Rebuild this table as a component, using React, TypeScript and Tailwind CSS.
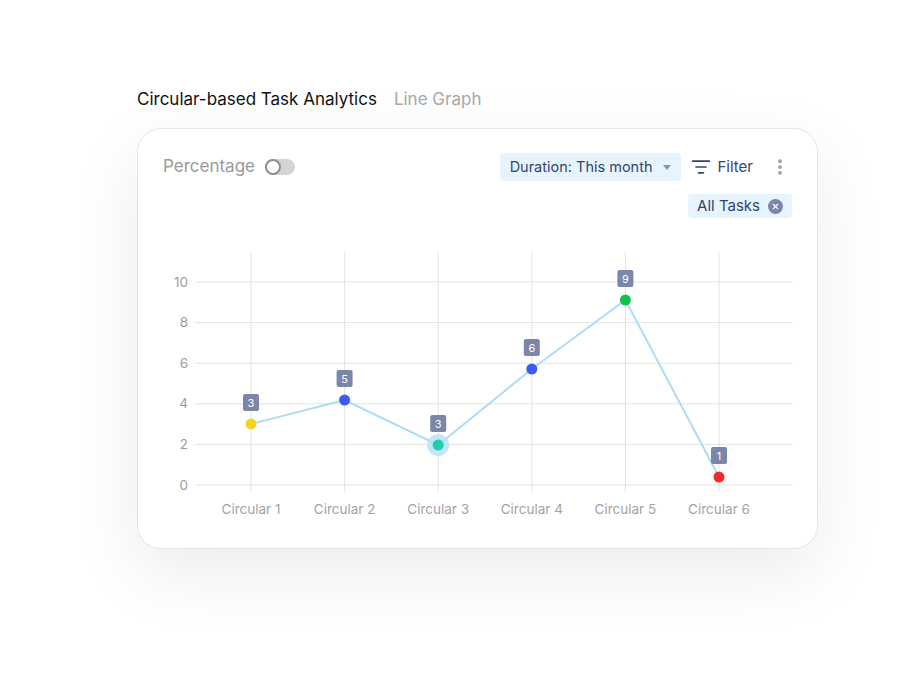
import { ListFilter, EllipsisVertical, X } from "lucide-react";

const yTicks = [10, 8, 6, 4, 2, 0];
const gridY = [42, 82.6, 123.2, 163.8, 204.4, 245];
const colX = [113, 206.6, 300.2, 393.8, 487.4, 581];

const points = [
  { label: "Circular 1", value: 3, y: 184, color: "#f2d51c" },
  { label: "Circular 2", value: 5, y: 160, color: "#3b5bf5" },
  { label: "Circular 3", value: 3, y: 205, color: "#1fd1a5", active: true },
  { label: "Circular 4", value: 6, y: 129, color: "#3b5bf5" },
  { label: "Circular 5", value: 9, y: 60, color: "#14c14b" },
  { label: "Circular 6", value: 1, y: 237, color: "#f22b2b" },
];

function Chart() {
  const line = points.map((p, i) => `${colX[i]},${p.y}`).join(" ");
  return (
    <svg width="681" height="290" viewBox="0 0 681 290" className="block">
      {gridY.map((y, i) => (
        <g key={i}>
          <line x1="57" x2="655" y1={y} y2={y} stroke="#e4e4e4" strokeWidth="1" />
          <text
            x="50"
            y={y + 4.5}
            textAnchor="end"
            fontSize="13.5"
            fill="#9c9c9c"
            fontFamily="Inter, sans-serif"
          >
            {yTicks[i]}
          </text>
        </g>
      ))}
      {colX.map((x, i) => (
        <g key={i}>
          <line x1={x} x2={x} y1="12" y2="252" stroke="#e4e4e4" strokeWidth="1" />
          <text
            x={x}
            y="273.5"
            textAnchor="middle"
            fontSize="13.5"
            fill="#a3a3a3"
            fontFamily="Inter, sans-serif"
          >
            {points[i].label}
          </text>
        </g>
      ))}
      <polyline points={line} fill="none" stroke="#aedcf5" strokeWidth="2" />
      {points.map((p, i) => (
        <g key={i}>
          {p.active && <circle cx={colX[i]} cy={p.y} r="11" fill="#b9e0f6" opacity="0.85" />}
          <circle cx={colX[i]} cy={p.y} r="5.5" fill={p.color} />
          <rect x={colX[i] - 8} y={p.y - 30} width="16" height="17" rx="2" fill="#7b86a8" />
          <text
            x={colX[i]}
            y={p.y - 17.5}
            textAnchor="middle"
            fontSize="11"
            fill="#ffffff"
            fontFamily="Inter, sans-serif"
          >
            {p.value}
          </text>
        </g>
      ))}
    </svg>
  );
}

export default function App() {
  return (
    <div
      className="w-[905px] h-[686px] bg-white pt-[87px] pl-[137px]"
      style={{ fontFamily: "Inter, 'Noto Sans', sans-serif" }}
    >
      <div className="flex items-baseline gap-[17px] leading-6">
        <span className="text-[17px] text-[#111111]">Circular-based Task Analytics</span>
        <span className="text-[17px] text-[#a8a8a8]">Line Graph</span>
      </div>

      <div className="mt-[17px] w-[681px] h-[421px] rounded-[24px] border border-[#e6e6e6] bg-white shadow-[0_24px_70px_rgba(0,0,0,0.08)]">
        <div className="flex items-start justify-between pl-[25px] pr-[24px] pt-[24px]">
          <div className="flex items-center gap-[10px] h-[28px]">
            <span className="text-[17px] text-[#9a9a9a]">Percentage</span>
            <div className="relative h-[16px] w-[30px] rounded-full bg-[#d4d4d4]">
              <div className="absolute left-0 top-0 h-[16px] w-[16px] rounded-full border-[2px] border-[#8f8f8f] bg-white" />
            </div>
          </div>

          <div className="flex flex-col items-end gap-[13px]">
            <div className="flex items-center">
              <div className="flex h-[28px] items-center gap-[10px] rounded-[4px] bg-[#e6f4fd] pl-[10px] pr-[10px] text-[14.5px] text-[#34446a]">
                <span>Duration: This month</span>
                <svg width="8" height="5" viewBox="0 0 8 5">
                  <path d="M0 0h8L4 5z" fill="#8a93ad" />
                </svg>
              </div>
              <div className="ml-[10px] flex items-center gap-[7px] text-[15px] text-[#34446a]">
                <ListFilter size={20} strokeWidth={2} color="#34446a" />
                <span>Filter</span>
              </div>
              <EllipsisVertical size={20} className="ml-[17px] mr-[3px]" color="#9e9e9e" strokeWidth={2.5} />
            </div>
            <div className="mr-[1px] flex h-[24px] items-center gap-[8px] rounded-[4px] bg-[#e6f4fd] pl-[9px] pr-[9px] text-[15px] text-[#34446a]">
              <span>All Tasks</span>
              <span className="flex h-[15px] w-[15px] items-center justify-center rounded-full bg-[#7b86a8]">
                <X size={9} color="#ffffff" strokeWidth={3} />
              </span>
            </div>
          </div>
        </div>

        <div className="mt-[22px]">
          <Chart />
        </div>
      </div>
    </div>
  );
}
